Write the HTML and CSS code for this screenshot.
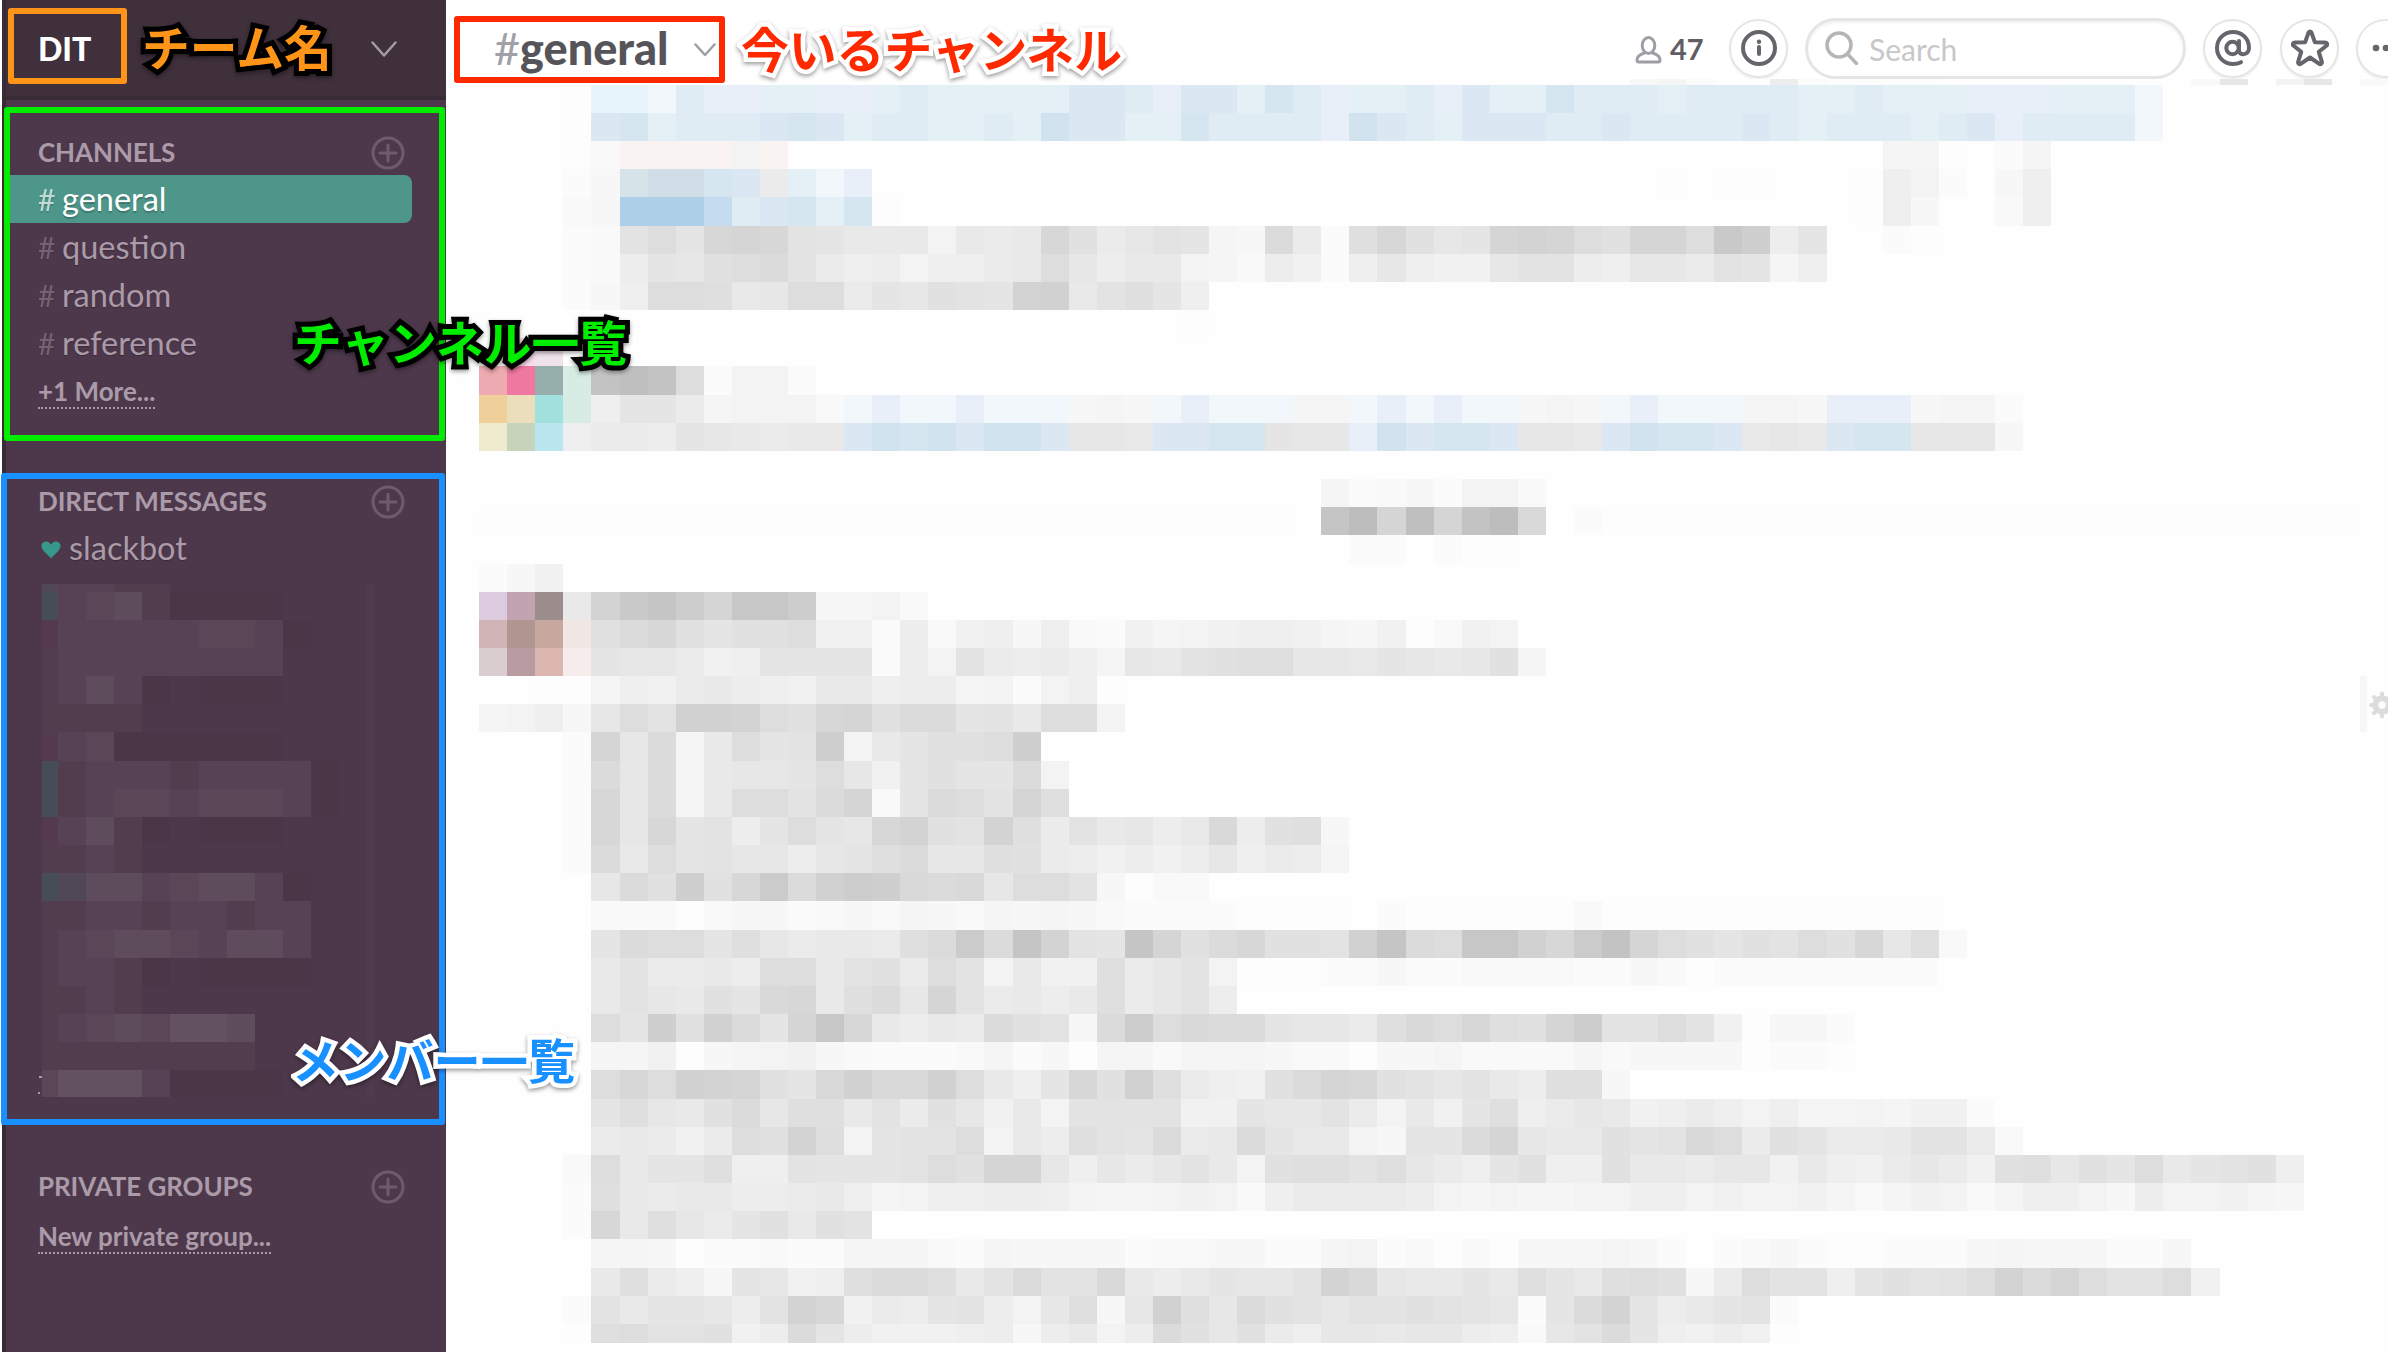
FILE: index.html
```html
<!DOCTYPE html>
<html lang="ja">
<head>
<meta charset="utf-8">
<title>DIT</title>
<link rel="stylesheet" href="styles.css">
</head>
<body>
<div class="app">
  <aside class="sidebar">
    <header class="team">
      <span class="team-name">DIT</span>
      <svg class="chevron" width="26" height="17" viewBox="0 0 26 17"><path d="M1.500 1.500 13 14.500 24.500 1.500"/></svg>
    </header>
    <section class="group channels">
      <div class="heading"><span>CHANNELS</span><svg class="plus" width="34" height="34" viewBox="0 0 34 34"><circle cx="17" cy="17" r="15"/><path d="M17 9v16M9 17h16"/></svg></div>
      <ul class="list">
        <li class="item active"><span class="hash">#</span>general</li>
        <li class="item"><span class="hash">#</span>question</li>
        <li class="item"><span class="hash">#</span>random</li>
        <li class="item"><span class="hash">#</span>reference</li>
      </ul>
      <div class="more"><span>+1 More...</span></div>
    </section>
    <section class="group direct">
      <div class="heading"><span>DIRECT MESSAGES</span><svg class="plus" width="34" height="34" viewBox="0 0 34 34"><circle cx="17" cy="17" r="15"/><path d="M17 9v16M9 17h16"/></svg></div>
      <div class="item bot"><svg class="heart" width="20" height="18" viewBox="0 0 20 18"><path d="M10 17.500C7 13.500 .5 9.500 .5 5 .5 2 2.700.5 5 .5 7.200.5 9 1.700 10 3.800 11 1.700 12.800.5 15 .5 17.300.5 19.500 2 19.500 5 19.500 9.500 13 13.500 10 17.500Z"/></svg>slackbot</div>
      <svg class="members" id="members" width="440" height="513" viewBox="6 584 440 513" shape-rendering="crispEdges"></svg>
    </section>
    <section class="group private">
      <div class="heading"><span>PRIVATE GROUPS</span><svg class="plus" width="34" height="34" viewBox="0 0 34 34"><circle cx="17" cy="17" r="15"/><path d="M17 9v16M9 17h16"/></svg></div>
      <div class="more"><span>New private group...</span></div>
    </section>
  </aside>
  <main class="main">
    <header class="topbar">
      <h1 class="title"><span class="title-hash">#</span>general</h1>
      <svg class="title-chevron" width="22" height="14" viewBox="0 0 22 14"><path d="M1.500 1.500 11 12 20.500 1.500"/></svg>
      <div class="tools">
        <div class="count">
          <svg width="27" height="28" viewBox="0 0 27 28"><ellipse cx="13.500" cy="9.500" rx="6.300" ry="8"/><path d="M9.500 17C4.500 18.500 2 20.500 2 24c0 1.500.5 2 2 2h19c1.500 0 2-.5 2-2 0-3.500-2.500-5.500-7.500-7"/></svg>
          <span>47</span>
        </div>
        <button class="round"><svg width="36" height="36" viewBox="0 0 36 36"><circle cx="18" cy="18" r="16"/><path d="M18 17v7"/><circle class="fill" cx="18" cy="11.800" r="2.200"/></svg></button>
        <div class="search">
          <svg width="34" height="34" viewBox="0 0 34 34"><circle cx="14" cy="14" r="12"/><path d="m22.500 23 9 9.500"/></svg>
          <span>Search</span>
        </div>
        <button class="round at"><svg width="36" height="36" viewBox="0 0 36 36"><circle cx="17.500" cy="18" r="6.200"/><path d="M24 11v9.500c0 5.500 10 5 10-2.500 0-9.500-7-16-16-16S2 9 2 18s7 16 16 16c3.200 0 5.500-.5 8-1.800"/></svg></button>
        <button class="round star"><svg width="38" height="38" viewBox="0 0 38 38"><path d="M19 2.500c.8 0 1.300.5 1.600 1.300l3.200 9.400 10.500.2c1.900 0 2.600 2.200 1.100 3.300l-7.600 6.100 3 9.900c.6 1.900-1.300 3.200-2.800 2L19 28.500l-9 6.200c-1.500 1.200-3.400-.1-2.800-2l3-9.900-7.600-6.100c-1.500-1.100-.8-3.300 1.100-3.300l10.500-.2 3.200-9.400c.3-.8.800-1.300 1.600-1.300Z"/></svg></button>
        <button class="round dots"><svg width="36" height="10" viewBox="0 0 36 10"><circle class="fill" cx="8" cy="5" r="3.300"/><circle class="fill" cx="18" cy="5" r="3.300"/><circle class="fill" cx="28" cy="5" r="3.300"/></svg></button>
      </div>
    </header>
    <div class="messages">
      <svg id="messages" width="1942" height="1273" viewBox="446 79 1942 1273" shape-rendering="crispEdges"></svg>
      <svg class="gear" width="28" height="30" viewBox="0 0 28 30"><circle class="ring" cx="14" cy="15" r="6.700"/><path d="M14 5V3.500M14 25v1.500M4 15H3M24 15h1M7 8 6 7M21 8l1-1M7 22l-1 1M21 22l1 1"/></svg>
    </div>
  </main>
  <div class="box box-team"></div>
  <div class="box box-channels"></div>
  <div class="box box-members"></div>
  <div class="box box-current"></div>
  <div class="note dark note-team">チーム名</div>
  <div class="note light note-current">今いるチャンネル</div>
  <div class="note dark note-channels">チャンネル一覧</div>
  <div class="note light note-members">メンバー一覧</div>
</div>
<script src="mosaic.js"></script>
</body>
</html>
```
FILE: mosaic.js
```js
// Masked conversation. Each line is one row of cells, written as "column:cells".
// 0-9 and a-z are greys (two levels apart, 0 is white); other marks are in the palette.
const palette = {
  A: '#e4f0f6', B: '#e8eff8', C: '#dfecf4', D: '#d5e6f0', E: '#dbe8f4', F: '#e7f4fc', G: '#f1f7fb',
  I: '#acd0e7', J: '#c5dcf0', K: '#d0dee7', V: '#d1e3ef', '@': '#d5e4e9',
  L: '#edaab0', M: '#ee78a0', N: '#96afac', O: '#d7ece5', P: '#efd09b', Q: '#ebdfbb', R: '#a1e1dd',
  S: '#efeacd', T: '#c7d4bc', U: '#bbe5ef',
  W: '#dccbdf', X: '#c2a3b1', Y: '#9b8d8b', Z: '#cfb5b5', '!': '#b19590', '#': '#c7a89f', '$': '#f0e6e3',
  '%': '#dacdd0', '&': '#b89ca1', '*': '#dbb7b0', '+': '#f6eceb', '=': '#f9f3f1', '^': '#f8dde8', '_': '#efe2e9'
};
const rows = [
  '41:4520092 48:1111 61:3c06c 67:3',
  '3:1FFGCBBAABBACAAAAAEECBEEADCBAACBEAADCCCACCCCAACAAABBBAAAG',
  '3:1EDACCCEDEACCAACAVEEAADCCCCBVECAEEECCECCCCECACCCACEBCCCCG',
  '3:13====6= 50:551025',
  '3:24@KKDEaAGB 42:1 44:11 49:18620 54:48',
  '3:34IIIJCEDAD1 49:184003 55:8',
  '3:23ehdklkedbbb6babkfaced54ia2gkfcdlmlhfllhro9d 50:21',
  '3:239dcfhiea89688abhc9bb6539728c877cee98ccaed58',
  '3:248hhgbchhadcfedmnbegd8',
  '25:1',
  '1:^_01',
  '0:LMNOuwuh2662',
  '0:PQRO8dda56663GBGGBGGG454GBGGG55GBGBGG454GBGGG554BBB4552',
  '0:STU8aa9dcbabbEVDVEVVEccbEEDDdccBVEDDEccbEVDDEbcbEDDccc4',
  '',
  '30:52342663',
  '0:11111111111111111111111111111 30:txlwluxj 39:2111111111111111111111111111',
  '31:220211',
  '0:247',
  '0:WXYbmrtplssp4463',
  '0:Z!#$fikfdffh7729378483275678875471376',
  '0:%&*+dcca78dddd296ea9a85cbefggccbdcbcf5',
  '2:11587ab987bb899562681',
  '0:5684chennmhfklfiidebhh6',
  '3:2lci5bhdeo6bdffffho',
  '3:2ici5bccdhc7dfddi6',
  '3:2kci5bhheil3dihelg',
  '3:2kckde9dhdckmfemgaebc9bj9fg4',
  '3:2ibhdecc9cdgiccgfa97979c8a95',
  '4:cifofkqinpojijchhe4133',
  '4:333134423435435454322221111021111113111111111111',
  '4:dihhdgcabbagiqitmedtlfikffentihssnkqulhfdfehfkcg3',
  '4:beaab9hhbefahe6b77gace61112242233332243122222222',
  '4:becbfdjkbgicleab9bgace9',
  '4:hdofnidlskb9baife4iphjiidccagjhkgflpeehe71442',
  '4:557145674322235241553555433144533335344441221',
  '4:hkhnmlfdjnjjnhb8dkfnga87filkfeceb9gg4',
  '4:dgcbficggbeafc7b6eeee77dccea6b7dg8acb78a8685565772',
  '4:aba7ahfmh6deeh6b9gediabidbb64ddilcbbfdejhafdaabeea3',
  '3:3hbddg88edddehfllc8caceb6fggegca8df88fbbacc7b87aca7fgcfdhbdef8',
  '3:2gbabb99ab8568899865567638aaaa9656556688676675357635886496675 64:4',
  '3:2kbgcadfbfe',
  '4:554122322555325444423344225623131444542023421122245444224',
  '4:bga84dc78giigbeieejb9bdccemjcbbdbgdbghf4ahee8dfdehmilheeh7',
  '3:2ebddc9emk7a9de96cg4cngcifeceefedc2dimd9bde2',
  '3:1gheef79id97778949b69ifcfa8ccbcc983ceid8797 46:1'
];
rows[24] = '3:2lci5bhdeo6bdffho';

// Masked member names: steps of lightened, darkened and tinted sidebar purple.
const purples = {
  1: '#523d4f', 2: '#564254', 3: '#5a4657', 4: '#5e4b5b', 5: '#635060',
  d: '#4b3647', t: '#464c58', u: '#514857', r: '#543a4e'
};
const memberRows = [
  'u2211', 't2341dddd', 'r22222332d', '122222222', '1242d.ddd', '1111', 'r23dddddd', 't122212222d',
  't123323332d', 'r241d.ddd', '1121', 'tu4423442d', '1122122122', '1234432442', '1221d.dddd', '1121',
  '12343554', '11111111', '35552dddd'
];

const CELL_X = 28.07, CELL_Y = 28.165, LEFT = 479.2, TOP = 84.7;
const colX = c => Math.round(LEFT + c * CELL_X);
const rowY = r => Math.round(TOP + r * CELL_Y);

function rect(svg, x, y, x2, y2, fill) {
  const el = document.createElementNS('http://www.w3.org/2000/svg', 'rect');
  el.setAttribute('x', x);
  el.setAttribute('y', y);
  el.setAttribute('width', x2 - x);
  el.setAttribute('height', y2 - y);
  el.setAttribute('fill', fill);
  svg.appendChild(el);
}

const messages = document.getElementById('messages');
rows.forEach((line, i) => {
  const r = i - 1;
  line.split(' ').filter(Boolean).forEach(run => {
    const cut = run.indexOf(':');
    const start = Number(run.slice(0, cut));
    [...run.slice(cut + 1)].forEach((ch, k) => {
      if (ch === '0') return;
      const v = 255 - 2 * parseInt(ch, 36);
      const fill = palette[ch] || `rgb(${v},${v},${v})`;
      rect(messages, colX(start + k), Math.max(79, rowY(r)), colX(start + k + 1), Math.min(1343, rowY(r + 1)), fill);
    });
  });
});
rect(messages, 2360, 676, 2367, 732, '#f7f7f7');

const members = document.getElementById('members');
memberRows.forEach((line, i) => {
  const r = 17 + i;
  [...line].forEach((ch, k) => {
    if (ch === '.') return;
    rect(members, Math.max(42, colX(k - 16)), Math.max(584, rowY(r)), colX(k - 15), Math.min(1097, rowY(r + 1)), purples[ch]);
  });
});
rect(members, 367, 584, 374, 1097, '#503b4d');
rect(members, 39, 1076, 42, 1078, '#ab9ba9');
rect(members, 38, 1092, 40, 1094, '#ab9ba9');
```
FILE: styles.css
```css
* { box-sizing: border-box; }
body { margin: 0; background: #fff; font-family: Lato, "Noto Sans CJK JP", sans-serif; }
svg { display: block; flex: none; fill: none; stroke-linecap: round; stroke-linejoin: round; }
.app { position: relative; display: flex; width: 2388px; height: 1352px; overflow: hidden; }

.sidebar { width: 444px; height: 1352px; margin-left: 2px; border-left: 4px solid #392b36; background: #4d384b; color: #ab9ba9; flex: none; }
.team { display: flex; align-items: center; justify-content: space-between; height: 100px; padding: 0 49px 2px 32px; background: #3f303b; border-bottom: 4px solid #392b36; }
.team-name { margin-top: 3px; color: #fff; font-size: 32px; font-weight: 900; line-height: 40px; }
.chevron { stroke: #a59ba3; stroke-width: 2.500; margin-top: 4px; }
.heading { display: flex; align-items: center; justify-content: space-between; height: 34px; padding: 0 41px 0 32px; font-size: 26px; font-weight: 700; line-height: 32px; letter-spacing: -.1px; }
.heading span { margin-top: -2px; }
.plus { stroke: #6d5a6a; stroke-width: 3; }
.channels { padding-top: 36px; }
.list { list-style: none; margin: 5px 0 0; padding: 0; }
.item { display: flex; width: 406px; height: 48px; padding-left: 32px; font-size: 32.500px; line-height: 48px; text-shadow: 0 1px 1px rgba(0,0,0,.25); }
.hash { width: 24px; font-size: 30px; opacity: .42; }
.active { background: #4d9689; color: #fff; border-radius: 0 8px 8px 0; text-shadow: 0 2px 1px rgba(0,0,0,.2); }
.active .hash { opacity: .65; }
.more { height: 48px; padding-left: 32px; font-size: 26px; font-weight: 700; line-height: 48px; }
.more span { border-bottom: 2px dotted #ab9ba9; }
.direct { padding-top: 70px; }
.bot { margin-top: 5px; align-items: center; padding-left: 35px; }
.heart { fill: #38978d; margin: 4px 8px 0 0; }
.members { margin-top: 12px; }
.private { padding-top: 73px; }
.private .more { margin-top: 8px; }

.main { display: flex; flex-direction: column; flex: 1; min-width: 0; }
.topbar { display: flex; align-items: center; height: 79px; padding-left: 48px; flex: none; }
.title { margin: 16px 0 0; width: 200px; color: #555459; font-size: 45px; font-weight: 900; line-height: 52px; white-space: nowrap; }
.title-hash { color: #a0a0a6; font-weight: 400; }
.title-chevron { stroke: #9e9ea6; stroke-width: 2.500; margin-top: 21px; }
.tools { display: flex; align-items: center; width: 752px; height: 61px; margin: 17px 0 0 919px; flex: none; }
.count { display: flex; align-items: center; gap: 8px; width: 94px; color: #5f5e64; font-size: 29px; font-weight: 700; line-height: 40px; flex: none; }
.count svg { stroke: #9e9ea6; stroke-width: 3; margin-top: 3px; }
.count span { margin-top: 2px; }
.round { display: flex; align-items: center; justify-content: center; width: 59px; height: 59px; padding: 0; border: 2px solid #e5e5e5; border-radius: 50%; background: #fff; box-shadow: 0 2px 2px rgba(0,0,0,.06); flex: none; }
.round svg { stroke: #66656b; stroke-width: 4; }
.round .fill { fill: #66656b; stroke: none; }
.search { display: flex; align-items: center; gap: 10px; width: 381px; height: 61px; margin-left: 17px; padding-left: 17px; border: 3px solid #e5e5e5; border-radius: 31px; box-shadow: inset 0 2px 3px rgba(0,0,0,.06); color: #c8c8c8; font-size: 30px; line-height: 40px; flex: none; }
.search svg { stroke: #b5b5b8; stroke-width: 3.500; }
.search span { margin-top: 2px; }
.at { margin-left: 17px; }
.star { margin-left: 18px; }
.dots { margin-left: 17px; }
.messages { position: relative; height: 1273px; background: #fefefe; }
.gear { position: absolute; left: 1922px; top: 611px; stroke: #dcdcdc; stroke-width: 4; }
.gear .ring { stroke-width: 6; }

.box { position: absolute; border: 6px solid; border-radius: 3px; }
.box-team { left: 8px; top: 8px; width: 119px; height: 76px; border-color: #ff9518; }
.box-channels { left: 4px; top: 107px; width: 441px; height: 334px; border-color: #00ed00; }
.box-members { left: 1px; top: 473px; width: 444px; height: 652px; border-color: #1990ff; }
.box-current { left: 454px; top: 16px; width: 271px; height: 67px; border-color: #ff2900; }
.note { position: absolute; font-family: "Noto Sans CJK JP", sans-serif; font-size: 47.800px; font-weight: 700; line-height: 60px; white-space: nowrap; -webkit-text-stroke: 9px; paint-order: stroke fill; }
.dark { -webkit-text-stroke: 10px #000; filter: drop-shadow(0 2px 2px rgba(0,0,0,.4)); }
.light { -webkit-text-stroke-color: #fff; filter: drop-shadow(0 2px 2px rgba(0,0,0,.4)); }
.note-team { left: 142px; top: 16px; color: #ff9518; }
.note-current { left: 741px; top: 18px; color: #ff2900; }
.note-channels { left: 294px; top: 311px; color: #00ed00; }
.note-members { left: 292px; top: 1029px; color: #1990ff; font-size: 47.200px; }
```
